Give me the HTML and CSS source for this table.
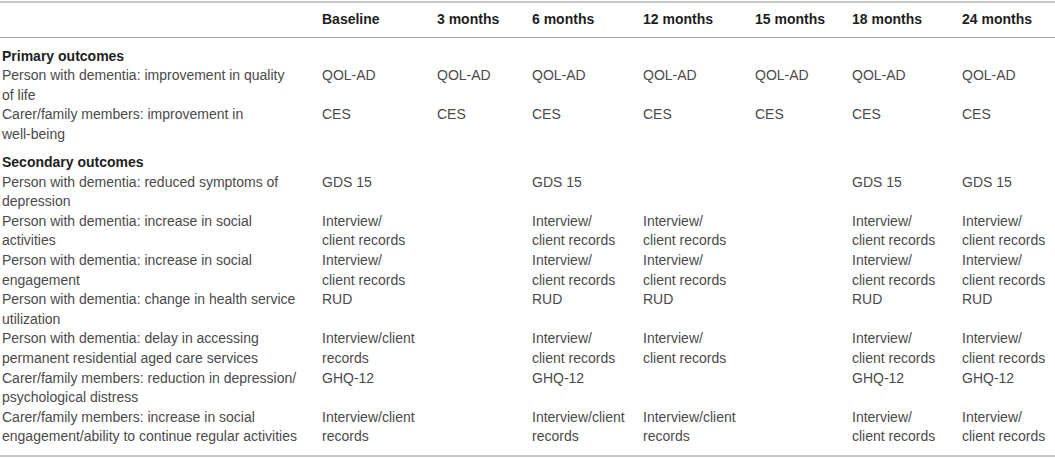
FILE: index.html
```html
<!DOCTYPE html>
<html lang="en">
<head>
<meta charset="utf-8">
<title>Outcomes and measures</title>
<link rel="stylesheet" href="styles.css">
</head>
<body>
<div class="wrap">
<table class="outcomes">
  <colgroup>
    <col class="c-label">
    <col class="c-base">
    <col class="c-3">
    <col class="c-6">
    <col class="c-12">
    <col class="c-15">
    <col class="c-18">
    <col class="c-24">
  </colgroup>
  <thead>
    <tr>
      <th class="label"></th>
      <th>Baseline</th>
      <th>3 months</th>
      <th>6 months</th>
      <th>12 months</th>
      <th>15 months</th>
      <th>18 months</th>
      <th>24 months</th>
    </tr>
  </thead>
  <tbody>
    <tr class="section first">
      <td class="label" colspan="8">Primary outcomes</td>
    </tr>
    <tr>
      <td class="label">Person with dementia: improvement in quality of life</td>
      <td>QOL-AD</td><td>QOL-AD</td><td>QOL-AD</td><td>QOL-AD</td><td>QOL-AD</td><td>QOL-AD</td><td>QOL-AD</td>
    </tr>
    <tr>
      <td class="label">Carer/family members: improvement in <span class="nowrap">well-being</span></td>
      <td>CES</td><td>CES</td><td>CES</td><td>CES</td><td>CES</td><td>CES</td><td>CES</td>
    </tr>
    <tr class="section">
      <td class="label" colspan="8">Secondary outcomes</td>
    </tr>
    <tr>
      <td class="label">Person with dementia: reduced symptoms of depression</td>
      <td>GDS 15</td><td></td><td>GDS 15</td><td></td><td></td><td>GDS 15</td><td>GDS 15</td>
    </tr>
    <tr>
      <td class="label">Person with dementia: increase in social activities</td>
      <td>Interview/<br>client records</td><td></td><td>Interview/<br>client records</td><td>Interview/<br>client records</td><td></td><td>Interview/<br>client records</td><td>Interview/<br>client records</td>
    </tr>
    <tr>
      <td class="label">Person with dementia: increase in social engagement</td>
      <td>Interview/<br>client records</td><td></td><td>Interview/<br>client records</td><td>Interview/<br>client records</td><td></td><td>Interview/<br>client records</td><td>Interview/<br>client records</td>
    </tr>
    <tr>
      <td class="label">Person with dementia: change in health service utilization</td>
      <td>RUD</td><td></td><td>RUD</td><td>RUD</td><td></td><td>RUD</td><td>RUD</td>
    </tr>
    <tr>
      <td class="label">Person with dementia: delay in accessing permanent residential aged care services</td>
      <td>Interview/client records</td><td></td><td>Interview/<br>client records</td><td>Interview/<br>client records</td><td></td><td>Interview/<br>client records</td><td>Interview/<br>client records</td>
    </tr>
    <tr>
      <td class="label">Carer/family members: reduction in depression/<wbr>psychological distress</td>
      <td>GHQ-12</td><td></td><td>GHQ-12</td><td></td><td></td><td>GHQ-12</td><td>GHQ-12</td>
    </tr>
    <tr class="last">
      <td class="label">Carer/family members: increase in social engagement/ability to continue regular activities</td>
      <td>Interview/client records</td><td></td><td>Interview/client records</td><td>Interview/client records</td><td></td><td>Interview/<br>client records</td><td>Interview/<br>client records</td>
    </tr>
  </tbody>
</table>
</div>
</body>
</html>
```
FILE: styles.css
```css
html, body {
  margin: 0;
  padding: 0;
  background: #ffffff;
}

.wrap {
  padding-top: 1px;
  width: 1055px;
}

.outcomes {
  width: 1055px;
  table-layout: fixed;
  border-collapse: separate;
  border-spacing: 0;
  font-family: "Liberation Sans", Arial, Helvetica, sans-serif;
  font-size: 14px;
  line-height: 19.6px;
  color: #4a4a4a;
}

.c-label { width: 322px; }
.c-base { width: 115px; }
.c-3 { width: 95px; }
.c-6 { width: 111px; }
.c-12 { width: 112px; }
.c-15 { width: 97px; }
.c-18 { width: 110px; }
.c-24 { width: 93px; }

.outcomes th,
.outcomes td {
  padding: 0;
  text-align: left;
  vertical-align: top;
}

.outcomes th {
  font-weight: bold;
  color: #1e1e1e;
  padding-top: 7px;
  padding-bottom: 7px;
  border-top: 2px solid #c6c6c6;
  border-bottom: 1px solid #a9a9a9;
}

.outcomes .label {
  padding-left: 2px;
  padding-right: 24px;
}

.nowrap {
  white-space: nowrap;
}

.section td {
  font-weight: bold;
  color: #1e1e1e;
  padding-top: 8.5px;
}

.section.first td {
  padding-top: 9px;
}

.last td {
  padding-bottom: 8px;
  border-bottom: 2px solid #c6c6c6;
}
```
